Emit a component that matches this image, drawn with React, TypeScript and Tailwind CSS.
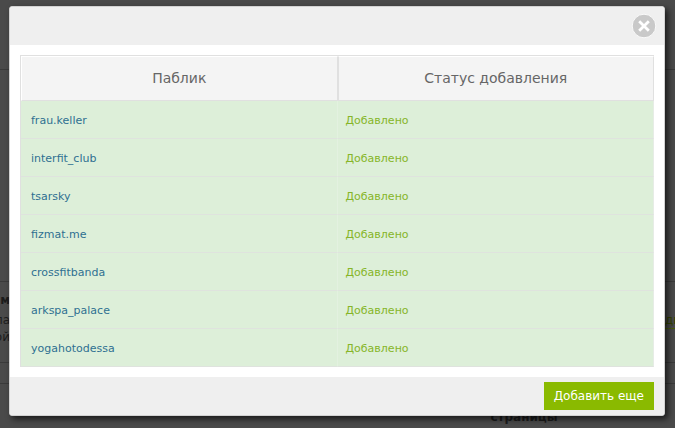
import React from "react";

const publics: string[] = [
  "frau.keller",
  "interfit_club",
  "tsarsky",
  "fizmat.me",
  "crossfitbanda",
  "arkspa_palace",
  "yogahotodessa",
];

function PageBehind() {
  return (
    <div aria-hidden="true" className="min-h-screen overflow-hidden text-[12px] leading-4 text-[#1c1c1c]">
      <div className="h-[70px] border-b border-[#3a3a3a]" />
      <div className="h-[212px] border-b border-[#3a3a3a]" />
      <div className="h-[81px] border-b border-[#3a3a3a] pt-2.5">
        <div className="flex">
          <b className="flex w-2.5 justify-end text-[12px]">ам</b>
        </div>
        <div className="mt-1 flex justify-between">
          <span className="flex w-2.5 justify-end">ла</span>
          <span className="w-2.5 border-b border-dashed border-[#4a6005] text-[#344400]">ди</span>
        </div>
        <span className="flex w-2.5 justify-end">ой</span>
      </div>
      <div className="h-[21px] border-b border-[#3a3a3a]" />
      <div className="flex justify-center pt-[25px] pl-[373px]">
        <b>страницы</b>
      </div>
    </div>
  );
}

function CloseIcon() {
  return (
    <svg width="26" height="26" viewBox="0 0 26 26" aria-hidden="true">
      <circle cx="13" cy="13" r="11.8" fill="#c9c9c9" stroke="#fafafa" strokeWidth="1" />
      <path d="M8.2 8.2l9.6 9.6M17.8 8.2l-9.6 9.6" stroke="#fff" strokeWidth="2.8" />
    </svg>
  );
}

export default function App() {
  return (
    <div className="relative min-h-screen overflow-hidden bg-[#4a4a4a] font-['Verdana','DejaVu_Sans',sans-serif]">
      <PageBehind />
      <div className="absolute inset-0 pt-1.5 pr-2.5 pl-[9px]">
        <section
          role="dialog"
          aria-label="Статус добавления"
          className="rounded-[3px] border border-[#d2d2d2] bg-white shadow-[3px_3px_6px_0px_rgba(0,0,0,0.65)]"
        >
          <header className="flex h-[38px] items-center justify-end rounded-t-[2px] bg-[#efefef] px-[7px]">
            <button type="button" aria-label="Закрыть" className="cursor-pointer">
              <CloseIcon />
            </button>
          </header>
          <div className="px-2.5 py-2.5">
            <table className="w-full table-fixed border-separate border-spacing-0 border-t border-l border-[#e0e0e0]">
              <thead>
                <tr className="h-[45px] text-[14px] text-[#666]">
                  <th scope="col" className="border-t border-r border-b border-l border-t-white border-r-[#e0e0e0] border-b-[#e0e0e0] border-l-white bg-[#f4f4f4] p-0 font-normal">
                    Паблик
                  </th>
                  <th scope="col" className="border-t border-r border-b border-l border-t-white border-r-[#e0e0e0] border-b-[#e0e0e0] border-l-[#e0e0e0] bg-[#f4f4f4] p-0 font-normal">
                    Статус добавления
                  </th>
                </tr>
              </thead>
              <tbody>
                {publics.map((name) => (
                  <tr key={name} className="h-[38px] bg-[#ddefd9] text-[11px] leading-4">
                    <td className="border-r border-b border-r-[#e3f1e0] border-b-[#dfe3de] pt-0.5 pr-2 pb-0 pl-2.5">
                      <a href={`#${name}`} className="text-[#2f6f91]">
                        {name}
                      </a>
                    </td>
                    <td className="border-r border-b border-r-[#e6ece5] border-b-[#dfe3de] px-2 pt-0.5 pb-0 text-[#86b528]">
                      Добавлено
                    </td>
                  </tr>
                ))}
              </tbody>
            </table>
          </div>
          <footer className="flex h-[38px] items-center justify-end rounded-b-[2px] bg-[#efefef] px-2.5">
            <button type="button" className="h-7 cursor-pointer bg-[#8aba00] px-2.5 text-[12px] text-white">
              Добавить еще
            </button>
          </footer>
        </section>
      </div>
    </div>
  );
}
